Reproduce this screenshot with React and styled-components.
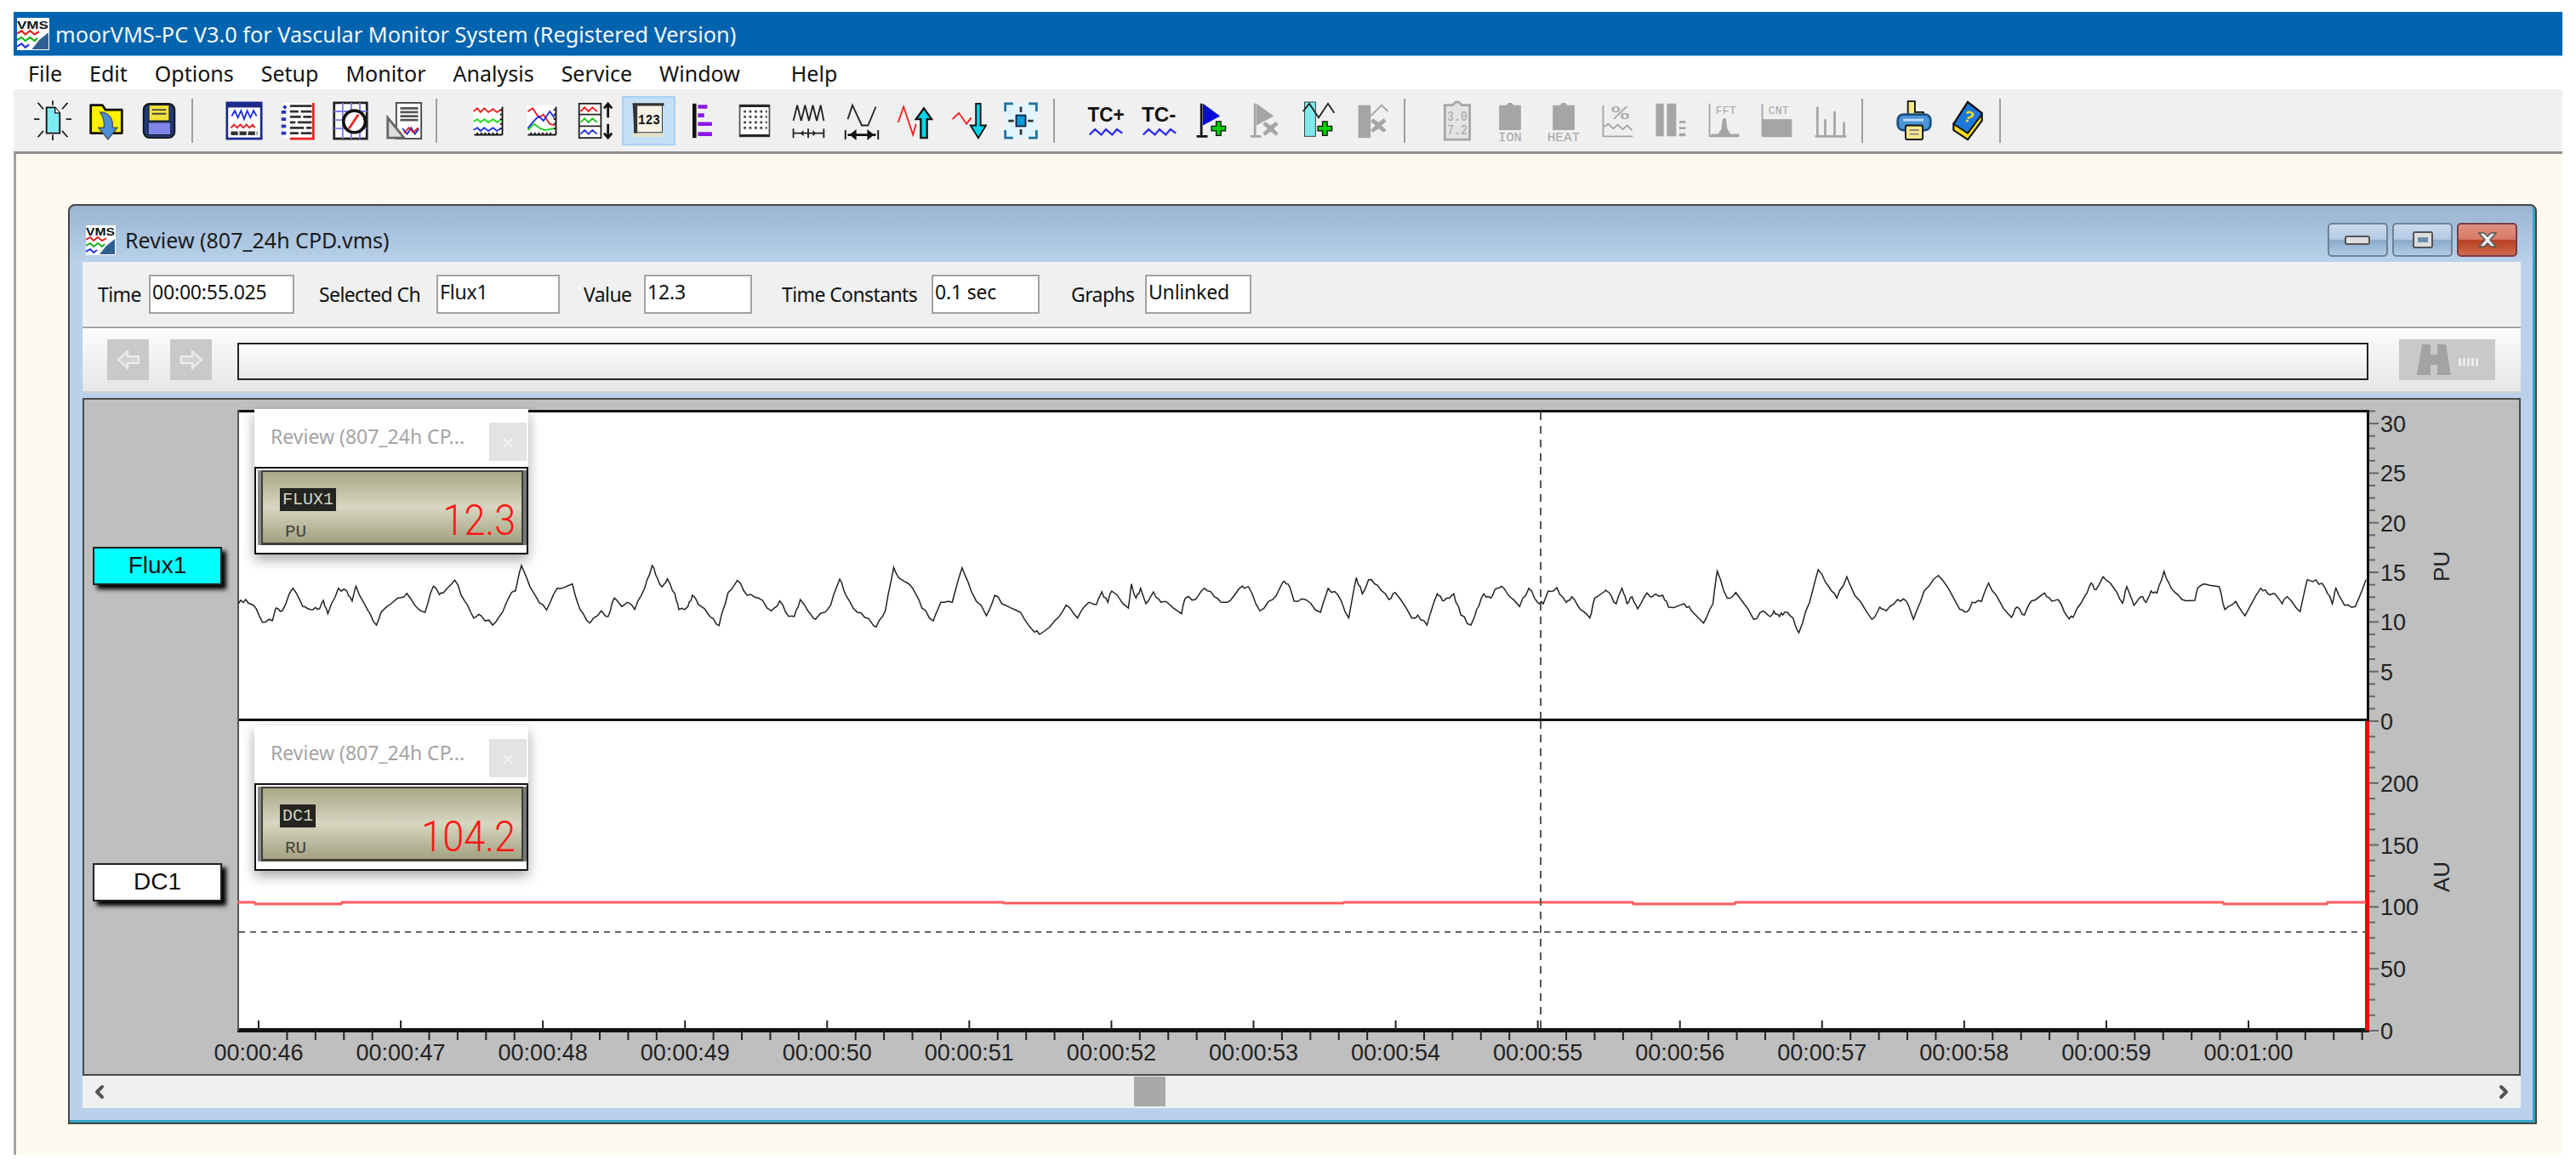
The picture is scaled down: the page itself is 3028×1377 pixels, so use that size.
import React from 'react'
import styled, { createGlobalStyle } from 'styled-components'
import { ChevronLeft, ChevronRight } from 'lucide-react'

const GlobalStyle = createGlobalStyle`
  html, body {
    margin: 0;
    background: #fff;
  }
  body {
    width: 3028px;
    height: 1377px;
    overflow: hidden;
    font-family: 'Noto Sans', 'Liberation Sans', sans-serif;
    color: #111;
  }
  * { box-sizing: border-box; }
`

const GRAY = '#a5a5a5'
const TRACE_A = [[0,270],[10,255],[20,275],[32,335],[45,330],[50,285],[58,295],[72,215],[85,280],[95,290],[105,290],[112,258],[118,305],[132,215],[143,225],[150,260],[155,208],[170,290],[182,345],[188,300],[210,250],[222,233],[238,290],[246,300],[257,208],[265,238],[272,225],[285,187],[298,260],[310,320],[320,312],[335,345],[348,300],[360,230],[365,225],[373,135],[380,180],[392,245],[406,292],[420,215],[435,205],[440,200],[450,290],[463,338],[478,295],[487,315],[495,250],[505,280],[512,265],[522,290],[535,215],[545,135],[552,180],[558,210],[565,182],[575,235],[580,290],[592,280],[598,240],[610,280],[622,318],[633,347],[645,230],[657,188],[670,240],[685,250],[702,295],[713,260],[725,315],[732,315],[740,255],[750,295],[760,325],[780,275],[792,183],[800,240],[815,300],[830,322],[840,352],[852,295],[863,142],[870,180],[880,195],[892,235],[900,285],[915,330],[925,265],[940,265],[953,143],[965,225],[985,312],[996,240],[1010,275],[1030,300],[1045,360],[1055,378],[1075,330],[1090,275],[1105,320],[1120,265],[1130,272],[1137,228],[1145,265],[1150,225],[1172,285],[1176,200],[1182,250],[1188,215],[1195,270],[1205,228],[1215,265],[1225,270],[1242,305],[1247,250],[1260,255],[1272,215],[1285,245],[1298,265],[1310,245],[1322,207],[1330,210],[1345,295],[1362,255],[1375,195],[1382,200],[1390,260],[1405,255],[1425,300],[1435,215],[1448,240],[1462,320],[1472,178],[1480,235],[1488,185],[1500,205],[1515,255],[1523,230],[1545,320],[1553,310],[1565,345]]
const TRACE_B = [[225,235],[232,258],[240,250],[248,235],[258,310],[272,345],[280,290],[290,235],[300,250],[308,215],[318,215],[340,280],[353,215],[365,265],[373,270],[380,225],[392,213],[405,265],[413,245],[425,290],[438,320],[445,250],[458,228],[465,230],[475,270],[483,215],[490,270],[497,245],[505,288],[518,232],[525,245],[540,240],[548,282],[570,270],[580,295],[597,338],[610,270],[616,155],[630,250],[642,230],[667,325],[680,295],[690,315],[695,295],[703,315],[710,300],[722,320],[730,372],[745,265],[757,150],[772,210],[783,250],[797,175],[808,240],[832,325],[843,282],[852,295],[868,255],[880,260],[890,325],[905,225],[925,170],[945,245],[955,290],[965,298],[972,265],[985,262],[995,197],[1010,260],[1027,318],[1035,282],[1045,310],[1055,260],[1073,232],[1083,260],[1092,255],[1105,315],[1113,318],[1130,240],[1138,197],[1145,220],[1155,175],[1170,215],[1182,268],[1188,210],[1198,275],[1208,245],[1215,265],[1222,225],[1230,232],[1240,155],[1250,215],[1265,255],[1283,258],[1287,215],[1297,200],[1317,210],[1325,290],[1340,262],[1353,312],[1375,215],[1385,235],[1395,235],[1405,270],[1412,245],[1430,298],[1440,185],[1452,185],[1465,215],[1475,270],[1480,215],[1492,275],[1507,280],[1522,185]]

// small fixed noise so the trace has the fine wiggle of sampled data
const noise = i => {
  const v = Math.sin(i * 12.9898) * 43758.5453
  return (v - Math.floor(v) - 0.5) * 5
}
const jagged = pts => pts.flatMap(([x, y], i) => {
  const next = pts[i + 1]
  if (!next) return [[x, y]]
  const dx = next[0] - x
  const dy = next[1] - y
  return [[x, y], [x + dx * 0.33, y + dy * 0.33 + noise(i)], [x + dx * 0.66, y + dy * 0.66 - noise(i + 7)]]
})

const fluxPoints = jagged([
  ...TRACE_A.map(([x, y]) => [1 + x / 1.12, 138 + y / 3]),
  ...TRACE_B.map(([x, y]) => [1221 + x / 1.188, 138 + y / 3]),
]).map(p => p.map(v => v.toFixed(1)).join(',')).join(' ')

const dcPoints = [[0,213],[20,213],[21,215],[122,215],[123,213],[900,213],[901,214],[1300,214],[1301,213],[1640,213],[1641,215],[1760,215],[1761,213],[2334,213],[2335,215],[2456,215],[2457,213],[2502,213]]
  .map(p => p.join(',')).join(' ')

const AppIcon = ({ size }) => (
  <svg width={size} height={size} viewBox="0 0 35 35">
    <rect width="35" height="35" fill="#fff" />
    <text x="0" y="12" fontFamily="Liberation Sans" fontSize="12" fontWeight="700" textLength="34" lengthAdjust="spacingAndGlyphs" fill="#111">VMS</text>
    <polyline points="0,17 5,14 9,18 14,14 19,18 24,15" fill="none" stroke="#e02020" strokeWidth="2" />
    <polyline points="0,24 5,21 9,25 14,21 19,25 22,22" fill="none" stroke="#18b018" strokeWidth="2" />
    <polyline points="0,31 5,28 9,32 13,29" fill="none" stroke="#2030e0" strokeWidth="2" />
    <path d="M16 34 L24 24 L34 16 L34 34 Z" fill="#2f5f90" />
  </svg>
)

const Plus = ({ x = 31, y = 31, c = '#00d000' }) => (
  <path transform={`translate(${x} ${y})`} d="M-3 -9h6v6h6v6h-6v6h-6v-6h-6v-6h6z" fill={c} stroke="#111" strokeWidth="1.5" />
)
const Cross = ({ x = 31, y = 33, c = GRAY }) => (
  <path transform={`translate(${x} ${y})`} d="M-7 -9L0 -4L7 -9L10 -5L4 0L10 6L7 9L0 4L-7 9L-10 6L-4 0L-10 -5Z" fill={c} />
)
const Wave = ({ y, c }) => (
  <polyline points={`7,${y} 11,${y - 4} 15,${y} 19,${y - 4} 23,${y} 27,${y - 4} 31,${y} 35,${y - 4} 38,${y}`} fill="none" stroke={c} strokeWidth="2" />
)
const Ruler = () => (
  <path d="M42 8v36M6 44h36M39 12h3M39 18h3M39 24h3M39 30h3M39 36h3M10 41v3M15 41v3M20 41v3M25 41v3M30 41v3M35 41v3" stroke="#111" strokeWidth="2" fill="none" />
)
const MiniText = ({ x, y, size = 13, c = GRAY, children, w, bold }) => (
  <text x={x} y={y} fontFamily="Liberation Mono" fontSize={size} fill={c} fontWeight={bold ? 700 : 400} textAnchor="middle" textLength={w} lengthAdjust={w ? 'spacingAndGlyphs' : undefined}>{children}</text>
)
const Clip = () => <path d="M10 6h9l3-3h4l3 3h9v32H10z" fill={GRAY} />

const ICONS = {
  spark: (
    <>
      <path d="M5 3l7 8M43 3l-7 8M0 24h7M41 24h7M5 47l7-8M43 47l-7-8M24 0v6M24 44v7" stroke="#222" strokeWidth="2" />
      <path d="M16 9h11l6 7v26H16z" fill="#7fe9f2" stroke="#111" strokeWidth="2" />
      <path d="M27 9v7h6" fill="#fff" stroke="#111" strokeWidth="1.5" />
    </>
  ),
  folder: (
    <>
      <path d="M4 6h15l4 6h21v30H4z" fill="#ffef00" stroke="#111" strokeWidth="3" strokeLinejoin="round" />
      <path d="M16 15c12 0 17 9 16 20h6L26 50L14 35h7c1-8-1-14-5-20z" fill="#4b8fd8" stroke="#456" strokeWidth="1.5" />
    </>
  ),
  save: (
    <>
      <rect x="4" y="4" width="40" height="44" rx="8" fill="#1f3a77" stroke="#111" strokeWidth="2" />
      <rect x="11" y="6" width="26" height="20" fill="#f4e13c" stroke="#111" />
      <path d="M15 12h18M15 17h18" stroke="#444" strokeWidth="2" />
      <rect x="10" y="28" width="29" height="16" fill="#7f86e8" stroke="#111" />
    </>
  ),
  monitor: (
    <>
      <rect x="2" y="3" width="44" height="46" fill="#fff" stroke="#1d2a8c" strokeWidth="3" />
      <rect x="2" y="3" width="44" height="6" fill="#1d2a8c" />
      <polyline points="8,20 12,13 16,22 20,13 24,24 28,13 32,22 36,13 40,20" fill="none" stroke="#2030e0" strokeWidth="2" />
      <Wave y={35} c="#e02020" />
      <path d="M7 42h34" stroke="#333" strokeWidth="5" strokeDasharray="9 2" />
    </>
  ),
  table: (
    <>
      <rect x="6" y="3" width="38" height="46" fill="#fff" />
      <path d="M44 3v46H14" fill="none" stroke="#f02020" strokeWidth="3" />
      <path d="M14 7h28M14 14h11M28 14h14M14 21h14M31 21h11M14 28h7M24 28h18M14 35h18M35 35h7M14 42h11M28 42h14" stroke="#333" strokeWidth="3" />
      <path d="M6 7l3 3M3 15h6M3 24h6M3 33h6M3 42h6" stroke="#2437b8" strokeWidth="4" />
    </>
  ),
  gauge: (
    <>
      <rect x="3" y="3" width="42" height="46" fill="#fff" stroke="#222" strokeWidth="3" />
      <path d="M3 14h42M3 25h42M3 36h42M14 3v46M25 3v46M36 3v46" stroke="#7c7cf0" strokeWidth="2" />
      <circle cx="29" cy="27" r="14" fill="#fff" stroke="#111" strokeWidth="4" />
      <path d="M22 36L34 18" stroke="#f02020" strokeWidth="3" />
    </>
  ),
  report: (
    <>
      <rect x="14" y="3" width="32" height="46" fill="#fff" stroke="#444" strokeWidth="2" />
      <path d="M19 10h23M19 15h23M19 20h23M19 25h23" stroke="#555" strokeWidth="3" />
      <path d="M3 22L24 48H3z" fill="#ddd" stroke="#666" strokeWidth="3" />
      <polyline points="22,36 28,43 33,35 38,43 43,36" fill="none" stroke="#2030e0" strokeWidth="2" />
      <polyline points="24,42 30,35 36,41 42,35" fill="none" stroke="#e02020" strokeWidth="2" />
    </>
  ),
  traces: (
    <>
      <rect x="5" y="6" width="37" height="38" fill="#fff" />
      <polyline points="5,14 10,10 14,15 19,10 24,15 30,11 35,15 40,12" fill="none" stroke="#f01818" strokeWidth="2" />
      <polyline points="5,27 10,24 14,28 19,24 24,28 30,24 35,28 40,25" fill="none" stroke="#18e018" strokeWidth="2" />
      <polyline points="5,38 10,35 14,39 19,35 24,39 30,35 35,39 40,36" fill="none" stroke="#2030e0" strokeWidth="2" />
      <Ruler />
    </>
  ),
  overlay: (
    <>
      <rect x="5" y="6" width="37" height="38" fill="#fff" />
      <polyline points="6,14 12,10 20,22 26,18 34,30 40,32" fill="none" stroke="#f01818" strokeWidth="2" />
      <polyline points="6,36 12,28 20,20 26,26 34,14 40,22" fill="none" stroke="#2030e0" strokeWidth="2" />
      <polyline points="6,38 14,30 22,36 28,38 40,36" fill="none" stroke="#18d018" strokeWidth="2" />
      <Ruler />
    </>
  ),
  stack: (
    <>
      <rect x="3" y="4" width="28" height="44" fill="#fff" stroke="#222" strokeWidth="2" />
      <path d="M3 18h28M3 33h28" stroke="#222" strokeWidth="2" />
      <polyline points="5,14 10,9 15,14 20,9 26,14" fill="none" stroke="#f01818" strokeWidth="2" />
      <polyline points="5,28 10,23 15,28 20,23 26,28" fill="none" stroke="#18c018" strokeWidth="2" />
      <polyline points="5,43 10,38 15,43 20,38 26,43" fill="none" stroke="#2030e0" strokeWidth="2" />
      <path d="M40 4v18M35 10l5-6l5 6M40 30v18M35 42l5 6l5-6" stroke="#111" strokeWidth="3" fill="none" />
    </>
  ),
  lcd: (
    <>
      <path d="M4 4h40l-2 3v34H6V7z" fill="#f5f3e6" stroke="#222" strokeWidth="1" />
      <path d="M4 4h40v3H10v36H6z" fill="#333" />
      <rect x="4" y="42" width="40" height="5" fill="#e4e0c4" />
      <MiniText x={25} y={30} size={17} c="#111" w={28} bold>123</MiniText>
    </>
  ),
  bars: (
    <>
      <rect x="12" y="4" width="5" height="44" fill="#111" />
      <path d="M19 8h12M19 19h8M19 30h18M19 43h18" stroke="#8a18e8" strokeWidth="5" />
    </>
  ),
  dots: (
    <>
      <rect x="5" y="6" width="38" height="40" fill="#fff" stroke="#555" strokeWidth="2" />
      <path d="M5 45h38M5 7h38" stroke="#222" strokeWidth="3" />
      <path d="M10 14h30M10 21h30M10 28h30M10 35h30" stroke="#444" strokeWidth="3" strokeDasharray="3 4" />
    </>
  ),
  peak: (
    <>
      <polyline points="5,26 10,6 15,26 20,6 25,26 30,6 35,26 40,6 44,26" fill="none" stroke="#222" strokeWidth="2" />
      <path d="M4 42h40M5 36v12M44 36v12M24 36v12" stroke="#222" strokeWidth="2" />
      <path d="M14 42l4-4v8zM34 42l-4-4v8z" fill="#222" />
    </>
  ),
  span: (
    <>
      <polyline points="6,24 12,6 24,32 32,32 42,8" fill="none" stroke="#222" strokeWidth="2" />
      <path d="M6 44h36" stroke="#111" strokeWidth="3" />
      <path d="M3 38v12M45 38v12M10 44l6-5v10zM38 44l-6-5v10z" fill="#111" stroke="#111" strokeWidth="2" />
    </>
  ),
  rise: (
    <>
      <polyline points="3,28 10,8 22,44 26,30" fill="none" stroke="#f02020" strokeWidth="2" />
      <path d="M36 10L46 24H40V48H32V24H26Z" fill="#00d4e8" stroke="#111" strokeWidth="2.5" />
    </>
  ),
  fall: (
    <>
      <polyline points="4,24 12,16 22,30 28,22" fill="none" stroke="#f02020" strokeWidth="2" />
      <path d="M34 4h6v28h7L37 48L27 32h7z" fill="#00d4e8" stroke="#111" strokeWidth="2" />
    </>
  ),
  fit: (
    <>
      <rect x="4" y="4" width="40" height="44" fill="#e0f5ff" />
      <path d="M4 14V4h10M34 4h10v10M44 38v10H34M14 48H4V38" fill="none" stroke="#1e6f9f" strokeWidth="3" />
      <rect x="18" y="19" width="12" height="14" fill="#0f9ad8" stroke="#124" strokeWidth="2" />
      <path d="M24 8v7M24 37v7M8 26h7M33 26h7" stroke="#333" strokeWidth="3" />
    </>
  ),
  tcPlus: (
    <>
      <text x="24" y="27" fontFamily="Liberation Sans" fontSize="26" fontWeight="700" textAnchor="middle" textLength="47" lengthAdjust="spacingAndGlyphs" fill="#111">TC+</text>
      <polyline points="3,44 10,37 18,44 24,37 32,44 38,37 45,42" fill="none" stroke="#2a2af0" strokeWidth="2.5" />
    </>
  ),
  tcMinus: (
    <>
      <text x="23" y="27" fontFamily="Liberation Sans" fontSize="26" fontWeight="700" textAnchor="middle" textLength="44" lengthAdjust="spacingAndGlyphs" fill="#111">TC-</text>
      <polyline points="3,44 10,37 18,44 24,37 32,44 38,37 45,42" fill="none" stroke="#2a2af0" strokeWidth="2.5" />
    </>
  ),
  flagAdd: (
    <>
      <path d="M10 4v42M4 46h14" stroke="#111" strokeWidth="3" />
      <path d="M12 4L34 20L12 32z" fill="#0808d8" />
      <Plus x={32} y={36} />
    </>
  ),
  flagDel: (
    <>
      <path d="M10 4v42M4 46h14" stroke={GRAY} strokeWidth="3" />
      <path d="M12 4L34 20L12 32z" fill={GRAY} />
      <Cross x={30} y={36} />
    </>
  ),
  bandAdd: (
    <>
      <rect x="6" y="2" width="14" height="44" fill="#7fe8e8" stroke="#333" strokeWidth="1" />
      <polyline points="4,14 12,4 24,22 36,4 44,16" fill="none" stroke="#222" strokeWidth="2" />
      <Plus x={32} y={36} />
    </>
  ),
  bandDel: (
    <>
      <rect x="6" y="6" width="16" height="42" fill={GRAY} />
      <polyline points="22,20 36,6 44,14" fill="none" stroke={GRAY} strokeWidth="2" />
      <Cross x={32} y={32} />
    </>
  ),
  clipData: (
    <>
      <path d="M8 6h10l4-4h4l4 4h10v44H8z" fill="#e4e4e4" stroke={GRAY} strokeWidth="3" />
      <MiniText x={24} y={26} size={17} w={26}>3.0</MiniText>
      <MiniText x={24} y={44} size={17} w={26}>7.2</MiniText>
    </>
  ),
  ion: (
    <>
      <Clip />
      <MiniText x={24} y={52} size={16} w={30}>ION</MiniText>
    </>
  ),
  heat: (
    <>
      <Clip />
      <MiniText x={24} y={52} size={16} w={42}>HEAT</MiniText>
    </>
  ),
  percent: (
    <>
      <path d="M7 6v40h38" fill="none" stroke={GRAY} strokeWidth="2" />
      <MiniText x={29} y={24} size={24} w={22}>%</MiniText>
      <polyline points="8,34 14,30 20,36 26,31 32,37 38,32 44,38" fill="none" stroke={GRAY} strokeWidth="2" />
    </>
  ),
  blocks: <path d="M6 4h10v42H6zM20 4h12v42H20zM36 26h8v3h-8zM36 34h8v3h-8zM36 42h8v4h-8z" fill={GRAY} />,
  fft: (
    <>
      <path d="M6 4v42h38" fill="none" stroke={GRAY} strokeWidth="2" />
      <MiniText x={27} y={17} size={14} w={26}>FFT</MiniText>
      <path d="M8 46h36v-3H33l-4-6l-2-14h-4l-2 14l-4 6H8z" fill={GRAY} />
    </>
  ),
  cnt: (
    <>
      <path d="M6 4v42" stroke={GRAY} strokeWidth="2" />
      <MiniText x={27} y={17} size={14} w={26}>CNT</MiniText>
      <rect x="6" y="24" width="38" height="23" fill={GRAY} />
    </>
  ),
  hist: <path d="M8 8v38M18 24v22M30 14v32M42 28v18M5 46h40" stroke={GRAY} strokeWidth="3" fill="none" />,
  print: (
    <>
      <path d="M16 1h9v14h11v10H16z" fill="#f6e98a" stroke="#111" strokeWidth="2" />
      <rect x="3" y="18" width="42" height="20" rx="7" fill="#4b94d8" stroke="#1a4f80" strokeWidth="3" />
      <path d="M10 25h26" stroke="#bfe0ff" strokeWidth="3" />
      <rect x="13" y="32" width="22" height="18" rx="2" fill="#f6e98a" stroke="#111" strokeWidth="2" />
      <path d="M18 38h12M18 43h12" stroke="#888" strokeWidth="2" />
    </>
  ),
  help: (
    <>
      <path d="M6 30L24 2L42 16V26L24 50L6 38z" fill="#1e78d8" stroke="#111" strokeWidth="2.5" />
      <path d="M6 30L24 42L42 18V26L24 50L6 38z" fill="#f5dd20" stroke="#111" strokeWidth="2" />
      <text x="25" y="28" fontFamily="Liberation Sans" fontSize="21" fontWeight="700" textAnchor="middle" fill="#f5dd20" transform="rotate(20 25 22)">?</text>
    </>
  ),
}

const TOOLBAR = [
  ['spark', 'folder', 'save'],
  ['monitor', 'table', 'gauge', 'report'],
  ['traces', 'overlay', 'stack', 'lcd', 'bars', 'dots', 'peak', 'span', 'rise', 'fall', 'fit'],
  ['tcPlus', 'tcMinus', 'flagAdd', 'flagDel', 'bandAdd', 'bandDel'],
  ['clipData', 'ion', 'heat', 'percent', 'blocks', 'fft', 'cnt', 'hist'],
  ['print', 'help'],
]

const MENU = ['File', 'Edit', 'Options', 'Setup', 'Monitor', 'Analysis', 'Service', 'Window']
const FIELDS = [
  { label: 'Time', value: '00:00:55.025', labelW: 60, inputW: 171, gap: 0 },
  { label: 'Selected Ch', value: 'Flux1', labelW: 138, inputW: 145, gap: 29 },
  { label: 'Value', value: '12.3', labelW: 71, inputW: 127, gap: 28 },
  { label: 'Time Constants', value: '0.1 sec', labelW: 176, inputW: 127, gap: 35 },
  { label: 'Graphs', value: 'Unlinked', labelW: 87, inputW: 125, gap: 37 },
]
const X_LABELS = ['00:00:46', '00:00:47', '00:00:48', '00:00:49', '00:00:50', '00:00:51', '00:00:52', '00:00:53', '00:00:54', '00:00:55', '00:00:56', '00:00:57', '00:00:58', '00:00:59', '00:01:00']

const Page = styled.div`
  width: 3028px;
  height: 1377px;
  padding: 14px 16px 19px;
  display: flex;
  flex-direction: column;
`
const AppTitle = styled.div`
  height: 52px;
  background: #0263ae;
  border-bottom: 1px solid #7db4dc;
  color: #f4f8fc;
  font-size: 25.3px;
  display: flex;
  align-items: center;
  gap: 7px;
  padding-left: 4px;
  white-space: nowrap;
  svg { flex: none; }
`
const MenuBar = styled.nav`
  height: 39px;
  background: #fff;
  display: flex;
  align-items: center;
  gap: 32px;
  padding-left: 17px;
  font-size: 25px;
  line-height: 1.2;
`
const MenuItem = styled.span`
  margin-left: ${p => p.$push || 0}px;
`
const ToolBar = styled.div`
  height: 73px;
  background: #f0f0f0;
  display: flex;
  align-items: center;
  padding-left: 15px;
`
const ToolButton = styled.div`
  width: 62.6px;
  height: 58px;
  flex: none;
  display: flex;
  align-items: center;
  justify-content: center;
  background: ${p => (p.$active ? '#c4dff6' : 'transparent')};
  box-shadow: ${p => (p.$active ? 'inset 0 0 0 2px #a9d0f2' : 'none')};
`
const ToolSep = styled.div`
  width: 2px;
  height: 52px;
  flex: none;
  background: #a0a0a0;
  margin: 0 29px 0 6px;
`
const Desktop = styled.main`
  flex: 1;
  background: #fffaf0;
  border-top: 3px solid #8f8f8f;
  border-left: 3px solid #a3a3a3;
  padding: 59px 30px 0 61px;
`
const Window = styled.section`
  height: 1082px;
  border: 2px solid #444;
  border-radius: 8px 8px 0 0;
  background: linear-gradient(#9ab5d2, #b9d1ea 66px);
  box-shadow: inset -3px -3px 0 #35a6c4;
  display: flex;
  flex-direction: column;
  padding: 0 17px 0 15px;
`
const WinTitle = styled.header`
  height: 66px;
  flex: none;
  display: flex;
  align-items: center;
  padding: 14px 4px 0 4px;
  font-size: 25px;
  color: #1b1b1b;
  gap: 11px;
`
const WinButtons = styled.div`
  margin-left: auto;
  display: flex;
  gap: 5px;
`
const WinButton = styled.div`
  width: 71px;
  height: 40px;
  border: 2px solid ${p => (p.$close ? '#7a3c48' : '#6d8199')};
  border-radius: 5px;
  display: flex;
  align-items: center;
  justify-content: center;
  background: ${p => (p.$close
    ? 'linear-gradient(#e2907f, #d77a68 48%, #b93f20 52%, #d16a50)'
    : 'linear-gradient(#c8daed, #b4cbe4 48%, #8aa9c8 52%, #b2cce6)')};
`
const InfoBar = styled.div`
  height: 78px;
  flex: none;
  background: #f0f0f0;
  border-bottom: 2px solid #a6a6a6;
  display: flex;
  align-items: center;
  padding: 0 0 0 18px;
  font-size: 23px;
`
const Field = styled.div`
  display: flex;
  align-items: center;
  margin-left: ${p => p.$gap}px;
`
const FieldLabel = styled.span`
  width: ${p => p.$w}px;
  flex: none;
  letter-spacing: -0.6px;
  white-space: nowrap;
`
const FieldInput = styled.div`
  width: ${p => p.$w}px;
  height: 46px;
  flex: none;
  background: #fff;
  border: 2px solid #a3a3a3;
  display: flex;
  align-items: center;
  padding: 0 2px 6px;
  letter-spacing: -0.2px;
  white-space: nowrap;
`
const NavBar = styled.div`
  height: 76px;
  flex: none;
  background: linear-gradient(#fcfcfc, #e6e6e6);
  border-bottom: 2px solid #d0d0d0;
  display: flex;
  align-items: center;
  padding: 0 30px 0 29px;
  margin-bottom: 6px;
`
const NavButton = styled.div`
  width: ${p => p.$w}px;
  height: 48px;
  flex: none;
  margin-right: ${p => p.$mr}px;
  background: #c9c9c9;
  display: flex;
  align-items: center;
  justify-content: center;
`
const SeekBox = styled.div`
  height: 44px;
  flex: 1;
  margin: 4px 36px 0 5px;
  border: 2px solid #222;
  background: linear-gradient(#fff, #e9e9e9);
`
const ChartPanel = styled.section`
  height: 797px;
  flex: none;
  background: #bfbfbf;
  border: 2px solid #4a4a4a;
  padding-top: 12px;
  display: flex;
  flex-direction: column;
`
const ChartRow = styled.div`
  height: ${p => p.$h}px;
  flex: none;
  display: flex;
`
const Rail = styled.div`
  width: 180px;
  flex: none;
  display: flex;
  align-items: center;
  padding: ${p => p.$shift}px 0 0 10px;
`
const Channel = styled.div`
  width: 152px;
  height: 45px;
  background: ${p => (p.$active ? '#00ffff' : '#fff')};
  border: 2px solid #222;
  box-shadow: 5px 5px 5px #000;
  font-family: 'Liberation Sans', Arial, sans-serif;
  font-size: 28px;
  color: #111;
  display: flex;
  align-items: center;
  justify-content: center;
`
const Plot = styled.div`
  width: 2506px;
  flex: none;
  position: relative;
  background: #fff;
  box-shadow: ${p => p.$shadow};
  > svg {
    position: absolute;
    inset: 0;
    overflow: visible;
  }
`
const Popup = styled.div`
  position: absolute;
  left: 20px;
  top: ${p => p.$top}px;
  width: 322px;
  height: 171px;
  background: #fff;
  box-shadow: 0 6px 14px rgba(0, 0, 0, 0.35);
  display: flex;
  flex-direction: column;
  z-index: 2;
`
const PopupHead = styled.div`
  height: 68px;
  flex: none;
  display: flex;
  align-items: flex-start;
  padding: 16px 2px 0 19px;
  font-size: 23px;
  color: #a4a4a4;
  justify-content: space-between;
  white-space: nowrap;
`
const PopupClose = styled.div`
  width: 44px;
  height: 45px;
  background: #e3e3e3;
  color: #f4f4f4;
  font-size: 26px;
  display: flex;
  align-items: center;
  justify-content: center;
`
const LcdFrame = styled.div`
  flex: 1;
  border: 2px solid #111;
  background: #fff;
  padding: 2px 4px 9px 6px;
  display: flex;
`
const Lcd = styled.div`
  flex: 1;
  position: relative;
  border: 2px solid #3f3f3a;
  border-bottom-width: 3px;
  box-shadow: -4px 0 0 #888, 4px 0 0 #777;
  background: linear-gradient(#a9a887, #d7d6c0 50%, #a3a181);
`
const LcdTag = styled.span`
  position: absolute;
  left: 20px;
  top: 19px;
  height: 27px;
  padding: 0 3px;
  background: #242420;
  color: #d6d6c2;
  font-family: 'Liberation Mono', monospace;
  font-size: 20px;
  line-height: 27px;
`
const LcdUnit = styled.span`
  position: absolute;
  left: 26px;
  bottom: 1px;
  color: #444438;
  font-family: 'Liberation Mono', monospace;
  font-size: 21px;
`
const LcdValue = styled.span`
  position: absolute;
  right: 7px;
  bottom: 0;
  color: #ff1414;
  font-family: Roboto, 'Liberation Sans', sans-serif;
  font-weight: 300;
  font-size: 50px;
  line-height: 52px;
  transform: scaleX(${p => p.$sx});
  transform-origin: right;
`
const AxisBox = styled.div`
  flex: 1;
  position: relative;
  svg {
    position: absolute;
    inset: 0;
    overflow: visible;
  }
`
const AxisRow = styled.div`
  height: 51px;
  flex: none;
  svg { display: block; overflow: visible; }
`
const ScrollBar = styled.div`
  height: 38px;
  flex: none;
  background: #f0f0f0;
  display: flex;
  align-items: center;
  justify-content: space-between;
  color: #555;
  padding: 0 8px;
`
const ScrollTrack = styled.div`
  flex: 1;
  height: 36px;
  display: flex;
  padding-left: ${p => p.$offset}px;
`
const ScrollThumb = styled.div`
  width: 37px;
  height: 35px;
  background: #a9a9a9;
`

const axisFont = { fontFamily: 'Liberation Sans', fontSize: 27, fill: '#222' }

const YAxis = ({ labels, ticks, major, unit, unitY }) => (
  <AxisBox>
    <svg width="176" height="10">
      {ticks.map((y, i) => (
        <line key={i} x1="0" x2={i % major === 0 ? 11 : 7} y1={y} y2={y} stroke="#666" strokeWidth="2" />
      ))}
      {labels.map(([y, text]) => (
        <text key={text} x="13" y={y + 10} {...axisFont}>{text}</text>
      ))}
      <text x="94" y={unitY} {...axisFont} fontSize="26" textAnchor="middle" transform={`rotate(-90 94 ${unitY})`}>{unit}</text>
    </svg>
  </AxisBox>
)

const lcdPopup = (top, tag, unit, value, sx) => (
  <Popup $top={top}>
    <PopupHead>
      Review (807_24h CP...
      <PopupClose>×</PopupClose>
    </PopupHead>
    <LcdFrame>
      <Lcd>
        <LcdTag>{tag}</LcdTag>
        <LcdUnit>{unit}</LcdUnit>
        <LcdValue $sx={sx}>{value}</LcdValue>
      </Lcd>
    </LcdFrame>
  </Popup>
)

const XAxis = () => {
  const ticks = []
  for (let i = 0; i < 75; i++) {
    const x = 205 + i * 33.414
    if (i % 5 !== 0 && x < 2684) ticks.push(x)
  }
  return (
    <svg width="2862" height="51">
      <rect x="180" y="-2" width="2506" height="4" fill="#111" />
      {ticks.map(x => (
        <line key={x} x1={x} x2={x} y1="0" y2="11" stroke="#222" strokeWidth="2" />
      ))}
      {X_LABELS.map((t, i) => (
        <text key={t} x={205 + i * 167.07} y="35" textAnchor="middle" {...axisFont}>{t}</text>
      ))}
    </svg>
  )
}

const upperTicks = Array.from({ length: 26 }, (_, i) => 366 - i * 14.58)
const lowerTicks = Array.from({ length: 21 }, (_, i) => 364 - i * 18.2)

const App = () => (
  <Page>
    <GlobalStyle />
    <AppTitle>
      <AppIcon size={38} />
      moorVMS-PC V3.0 for Vascular Monitor System (Registered Version)
    </AppTitle>
    <MenuBar>
      {MENU.map(m => <MenuItem key={m}>{m}</MenuItem>)}
      <MenuItem $push={28}>Help</MenuItem>
    </MenuBar>
    <ToolBar>
      {TOOLBAR.map((group, i) => (
        <React.Fragment key={i}>
          {group.map(name => (
            <ToolButton key={name} $active={name === 'lcd'}>
              <svg width="44" height="48" viewBox="0 0 48 52">{ICONS[name]}</svg>
            </ToolButton>
          ))}
          <ToolSep />
        </React.Fragment>
      ))}
    </ToolBar>
    <Desktop>
      <Window>
        <WinTitle>
          <AppIcon size={35} />
          Review (807_24h CPD.vms)
          <WinButtons>
            <WinButton>
              <svg width="34" height="14" viewBox="0 0 34 14"><rect x="2" y="3" width="28" height="9" rx="2" fill="#ddd" stroke="#555" strokeWidth="2" /></svg>
            </WinButton>
            <WinButton>
              <svg width="26" height="22" viewBox="0 0 26 22"><rect x="2" y="2" width="22" height="18" rx="2" fill="#ddd" stroke="#555" strokeWidth="2" /><rect x="7" y="8" width="12" height="6" fill="#6f8dad" /></svg>
            </WinButton>
            <WinButton $close>
              <svg width="26" height="20" viewBox="0 0 26 20"><path d="M3 2h6l4 4l4-4h6l-7 8l7 8h-6l-4-4l-4 4H3l7-8z" fill="#eee" stroke="#555" strokeWidth="1.5" /></svg>
            </WinButton>
          </WinButtons>
        </WinTitle>
        <InfoBar>
          {FIELDS.map(f => (
            <Field key={f.label} $gap={f.gap}>
              <FieldLabel $w={f.labelW}>{f.label}</FieldLabel>
              <FieldInput $w={f.inputW}>{f.value}</FieldInput>
            </Field>
          ))}
        </InfoBar>
        <NavBar>
          <NavButton $w={49} $mr={25}>
            <svg width="28" height="26" viewBox="0 0 28 26"><path d="M2 13L13 3v6h13v8H13v6z" fill="#d4d4d4" stroke="#eee" strokeWidth="2" /></svg>
          </NavButton>
          <NavButton $w={49} $mr={25}>
            <svg width="28" height="26" viewBox="0 0 28 26"><path d="M26 13L15 3v6H2v8h13v6z" fill="#d4d4d4" stroke="#eee" strokeWidth="2" /></svg>
          </NavButton>
          <SeekBox />
          <NavButton $w={113} $mr={0}>
            <svg width="72" height="36" viewBox="0 0 72 36">
              <path d="M6 0h10v12h8V0h10l6 36H24V24h-8v12H0z" fill="#a3a3a3" />
              <path d="M49 21h23" stroke="#eee" strokeWidth="9" strokeDasharray="3 2" />
            </svg>
          </NavButton>
        </NavBar>
        <ChartPanel>
          <ChartRow $h={366}>
            <Rail $shift={0}><Channel $active>Flux1</Channel></Rail>
            <Plot $shadow="inset 2px 0 #555, inset 0 3px #111, inset -3px 0 #111, inset 0 -3px #111">
              <svg width="2506" height="366">
                <polyline points={fluxPoints} fill="none" stroke="#222" strokeWidth="1.5" />
                <line x1="1532" x2="1532" y1="3" y2="363" stroke="#555" strokeWidth="2" strokeDasharray="9 7" />
              </svg>
              {lcdPopup(-1, 'FLUX1', 'PU', '12.3', 0.9)}
            </Plot>
            <YAxis
              ticks={upperTicks}
              major={4}
              unit="PU"
              unitY={184}
              labels={[[16, '30'], [74.3, '25'], [132.7, '20'], [191, '15'], [249.3, '10'], [307.7, '5'], [366, '0']]}
            />
          </ChartRow>
          <ChartRow $h={364}>
            <Rail $shift={14}><Channel>DC1</Channel></Rail>
            <Plot $shadow="inset 2px 0 #555, inset -5px 0 #f00, inset 0 -3px #111">
              <svg width="2506" height="364">
                <polyline points={dcPoints} fill="none" stroke="#ff5c5c" strokeWidth="3" />
                <line x1="2" x2="2501" y1="248" y2="248" stroke="#666" strokeWidth="2" strokeDasharray="7 6" />
                <line x1="1532" x2="1532" y1="0" y2="362" stroke="#555" strokeWidth="2" strokeDasharray="9 7" />
                {X_LABELS.map((t, i) => (
                  <line key={t} x1={25 + i * 167.07} x2={25 + i * 167.07} y1="352" y2="364" stroke="#222" strokeWidth="2" />
                ))}
              </svg>
              {lcdPopup(5, 'DC1', 'RU', '104.2', 0.9)}
            </Plot>
            <YAxis
              ticks={lowerTicks}
              major={4}
              unit="AU"
              unitY={183}
              labels={[[72.8, '200'], [145.6, '150'], [218.4, '100'], [291.2, '50'], [364, '0']]}
            />
          </ChartRow>
          <AxisRow><XAxis /></AxisRow>
        </ChartPanel>
        <ScrollBar>
          <ChevronLeft size={24} strokeWidth={4} />
          <ScrollTrack $offset={1204}><ScrollThumb /></ScrollTrack>
          <ChevronRight size={24} strokeWidth={4} />
        </ScrollBar>
      </Window>
    </Desktop>
  </Page>
)

export default App
